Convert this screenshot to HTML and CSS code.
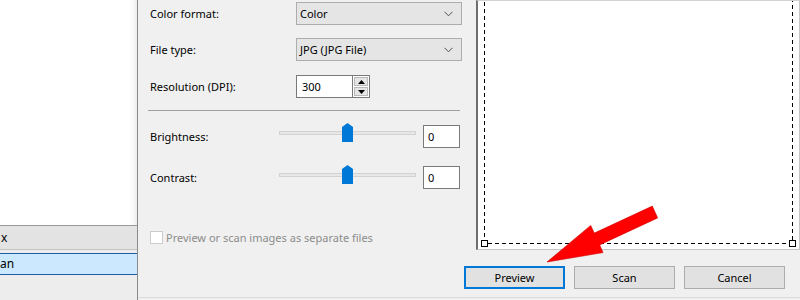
FILE: index.html
```html
<!DOCTYPE html>
<html>
<head>
<meta charset="utf-8">
<link rel="stylesheet" href="styles.css">
</head>
<body>
<div class="screen">
  <div class="side">
    <div class="side-blank"></div>
    <div class="side-head">x</div>
    <div class="side-gap"></div>
    <div class="side-sel">an</div>
    <div class="side-rest"></div>
  </div>
  <div class="main">
    <div class="upper">
      <div class="settings">
        <div class="row r1">
          <span class="label">Color format:</span>
          <div class="select"><span>Color</span><svg class="chev" width="9" height="6" viewBox="0 0 9 6"><path d="M0.5 0.8 L4.5 4.8 L8.5 0.8" fill="none" stroke="#505050" stroke-width="1"/></svg></div>
        </div>
        <div class="row r2">
          <span class="label">File type:</span>
          <div class="select"><span>JPG (JPG File)</span><svg class="chev" width="9" height="6" viewBox="0 0 9 6"><path d="M0.5 0.8 L4.5 4.8 L8.5 0.8" fill="none" stroke="#505050" stroke-width="1"/></svg></div>
        </div>
        <div class="row r3">
          <span class="label">Resolution (DPI):</span>
          <div class="spin">
            <div class="spin-input">300</div>
            <div class="spin-btns">
              <div class="spin-btn"><svg width="7" height="4" viewBox="0 0 7 4"><path d="M0 4 L3.5 0 L7 4 Z" fill="#000"/></svg></div>
              <div class="spin-btn"><svg width="7" height="4" viewBox="0 0 7 4"><path d="M0 0 L3.5 4 L7 0 Z" fill="#000"/></svg></div>
            </div>
          </div>
        </div>
        <div class="sep"></div>
        <div class="srow s1">
          <span class="slabel">Brightness:</span>
          <svg class="slider" width="137" height="26" viewBox="0 0 137 26">
            <rect x="0.5" y="8.5" width="136" height="3" fill="#e7e7e7" stroke="#d2d2d2"/>
            <path d="M63 19 L63 4 L68.5 0 L74 4 L74 19 Z" fill="#0078d7"/>
          </svg>
          <div class="valbox">0</div>
        </div>
        <div class="srow s2">
          <span class="slabel">Contrast:</span>
          <svg class="slider" width="137" height="26" viewBox="0 0 137 26">
            <rect x="0.5" y="9.5" width="136" height="3" fill="#e7e7e7" stroke="#d2d2d2"/>
            <path d="M63 20 L63 5 L68.5 1 L74 5 L74 20 Z" fill="#0078d7"/>
          </svg>
          <div class="valbox">0</div>
        </div>
        <div class="crow">
          <span class="cbox"></span>
          <span class="ctext">Preview or scan images as separate files</span>
        </div>
      </div>
      <div class="preview">
        <svg class="canvas" width="321" height="249" viewBox="0 0 321 249">
          <path d="M6.5 -5 L6.5 243.5 L314.5 243.5 L314.5 -5" fill="none" stroke="#000" stroke-width="1" stroke-dasharray="4 3"/>
          <rect x="3.5" y="240.5" width="6" height="6" fill="#fff" stroke="#000"/>
          <rect x="311.5" y="240.5" width="6" height="6" fill="#fff" stroke="#000"/>
        </svg>
      </div>
    </div>
    <div class="buttons">
      <button class="btn default">Preview</button>
      <button class="btn">Scan</button>
      <button class="btn">Cancel</button>
    </div>
  </div>
  <svg class="arrow" width="800" height="300" viewBox="0 0 800 300">
    <path d="M547 262 L590.7 225.4 L594.3 233.1 L652.3 206.1 L657.7 217.9 L599.7 244.9 L603 252.6 Z" fill="#ff0000" stroke="#d00000" stroke-width="0.6" stroke-linejoin="round"/>
  </svg>
</div>
</body>
</html>
```
FILE: styles.css
```css
* { box-sizing: border-box; }
html, body { margin: 0; padding: 0; }
body {
  width: 800px;
  height: 300px;
  overflow: hidden;
  font-family: "Noto Sans", "Open Sans", sans-serif;
  font-size: 11px;
  color: #000;
  background: #f0f0f0;
}
.screen {
  position: relative;
  display: flex;
  width: 800px;
  height: 300px;
}
.side {
  width: 138px;
  flex: none;
  display: flex;
  flex-direction: column;
  border-right: 1px solid #8a8a8a;
  background: #f0f0f0;
}
.side-blank {
  height: 226px;
  background: #fff;
  box-shadow: inset -7px 0 6px -5px rgba(0,0,0,0.10);
  border-bottom: 1px solid #9a9a9a;
}
.side-head {
  height: 24px;
  background: #e3e3e3;
  border-bottom: 1px solid #c4c4c4;
  line-height: 23px;
  padding-left: 1px;
  font-size: 12px;
}
.side-gap { height: 3px; background: #ececec; }
.side-sel {
  height: 22px;
  background: #cce8ff;
  border-top: 1px solid #1c5fa8;
  border-bottom: 1px solid #1c5fa8;
  line-height: 20px;
  font-size: 12px;
}
.side-rest { flex: 1; background: #ededed; }
.main {
  flex: 1;
  display: flex;
  flex-direction: column;
  border-bottom: 1px solid #dcdcdc;
  margin-bottom: 2px;
}
.upper {
  display: flex;
  height: 250px;
}
.settings {
  width: 338px;
  flex: none;
  padding: 2px 0 0 12px;
  display: flex;
  flex-direction: column;
}
.row {
  display: flex;
  align-items: center;
  height: 23px;
}
.r2 { margin-top: 13px; }
.r3 { margin-top: 14px; }
.label { width: 146px; flex: none; }
.select {
  width: 166px;
  height: 23px;
  background: #e5e5e5;
  border: 1px solid #adadad;
  display: flex;
  align-items: center;
  justify-content: space-between;
  padding: 0 8px 0 3px;
}
.chev { display: block; margin-top: 1px; }
.spin { display: flex; height: 23px; }
.spin-input {
  width: 57px;
  height: 23px;
  background: #fff;
  border: 1px solid #7a7a7a;
  padding-left: 5px;
  line-height: 21px;
}
.spin-btns {
  width: 17px;
  display: flex;
  flex-direction: column;
  gap: 1px;
  padding: 1px 0;
  background: #fff;
  border: 1px solid #7a7a7a;
  border-left: none;
}
.spin-btn {
  flex: 1;
  margin: 0 1px;
  background: #e5e5e5;
  border: 1px solid #b9b9b9;
  display: flex;
  align-items: center;
  justify-content: center;
}
.spin-btn svg { display: block; }
.sep {
  margin-top: 12px;
  margin-left: -2px;
  width: 312px;
  height: 1px;
  background: #a0a0a0;
}
.srow {
  display: flex;
  align-items: center;
  height: 26px;
}
.s1 { margin-top: 12px; }
.s2 { margin-top: 15px; }
.slabel { width: 129px; flex: none; }
.slider { display: block; flex: none; }
.valbox {
  margin-left: 7px;
  width: 37px;
  height: 23px;
  background: #fff;
  border: 1px solid #7a7a7a;
  padding-left: 4px;
  line-height: 21px;
}
.crow {
  margin-top: 39px;
  display: flex;
  align-items: center;
  height: 16px;
}
.cbox {
  width: 13px;
  height: 13px;
  border: 1px solid #cccccc;
  background: #fff;
  flex: none;
}
.ctext { margin-left: 3px; color: #8c8c8c; }
.preview {
  flex: 1;
  border-left: 2px solid #6f6f6f;
  background: #fff;
  border-bottom: 1px solid #c6c6c6;
  border-right: 1px solid #c6c6c6;
  border-top: 1px solid #d2d2d2;
  overflow: hidden;
}
.canvas { display: block; margin-top: -1px; }
.buttons {
  display: flex;
  justify-content: flex-end;
  gap: 9px;
  padding: 16px 15px 0 0;
}
.btn {
  width: 101px;
  height: 23px;
  background: #e1e1e1;
  border: 1px solid #adadad;
  font-family: inherit;
  font-size: 11px;
  color: #000;
  padding: 0;
  margin: 0;
}
.btn.default { border: 2px solid #0078d7; }
.arrow { position: absolute; left: 0; top: 0; pointer-events: none; }
```
